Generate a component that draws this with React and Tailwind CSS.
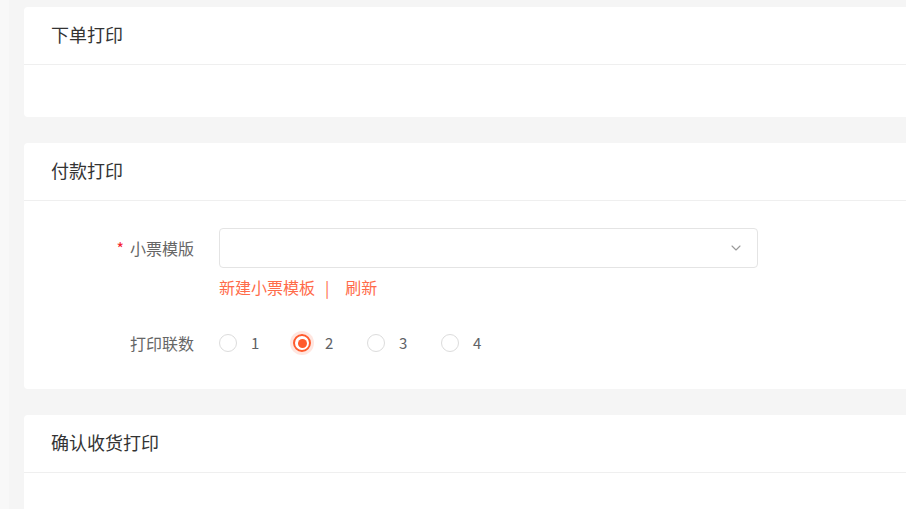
import { ChevronDown } from "lucide-react";

const font = { fontFamily: '"Noto Sans CJK SC", "Noto Sans", sans-serif' };

function Card({ title, children, bodyClass }) {
  return (
    <div className="bg-white rounded-l-[4px]">
      <div className="h-[58px] flex items-center pl-[27px] pb-[2px] border-b border-[#efefef] text-[18px] text-[#333]">
        {title}
      </div>
      <div className={bodyClass}>{children}</div>
    </div>
  );
}

function Radio({ label, checked }) {
  return (
    <label className="flex items-center w-[74px] cursor-pointer">
      {checked ? (
        <span className="w-[18px] h-[18px] rounded-full border-2 border-[#ff5a2c] flex items-center justify-center shadow-[0_0_0_3px_rgba(255,90,44,0.15)]">
          <span className="w-[9px] h-[9px] rounded-full bg-[#ff5a2c]" />
        </span>
      ) : (
        <span className="w-[18px] h-[18px] rounded-full border border-[#dcdcdc] bg-white" />
      )}
      <span className="ml-[14px] text-[15px] text-[#606266]">{label}</span>
    </label>
  );
}

export default function App() {
  return (
    <div className="flex w-[915px] h-[509px] overflow-hidden" style={font}>
      <div className="w-[9px] bg-[#f8f8f8]" />
      <div className="flex-1 bg-[#f5f5f5] pl-[15px] pt-[7px] flex flex-col gap-[26px] overflow-hidden">
        <Card title="下单打印" bodyClass="h-[52px]" />

        <Card title="付款打印" bodyClass="h-[188px] pt-[27px]">
          {/* 小票模版 */}
          <div className="flex items-center">
            <div className="w-[170px] text-right text-[16px] text-[#666]">
              <span className="text-[#f5222d] mr-[6px]">*</span>小票模版
            </div>
            <div className="ml-[25px] w-[539px] h-[40px] border border-[#e4e4e4] rounded-[4px] flex items-center justify-end pr-[13px]">
              <ChevronDown size={16} strokeWidth={1.6} className="text-[#999]" />
            </div>
          </div>
          <div className="ml-[195px] mt-[8px] h-[22px] flex items-center text-[16px] text-[#ff6b4a]">
            <span>新建小票模板</span>
            <span className="ml-[10px] mr-[16px]">|</span>
            <span>刷新</span>
          </div>

          {/* 打印联数 */}
          <div className="flex items-center mt-[33px]">
            <div className="w-[170px] text-right text-[16px] text-[#666]">打印联数</div>
            <div className="ml-[25px] flex items-center">
              <Radio label="1" />
              <Radio label="2" checked />
              <Radio label="3" />
              <Radio label="4" />
            </div>
          </div>
        </Card>

        <Card title="确认收货打印" bodyClass="h-[60px]" />
      </div>
      <div className="w-[9px] bg-white" />
    </div>
  );
}
